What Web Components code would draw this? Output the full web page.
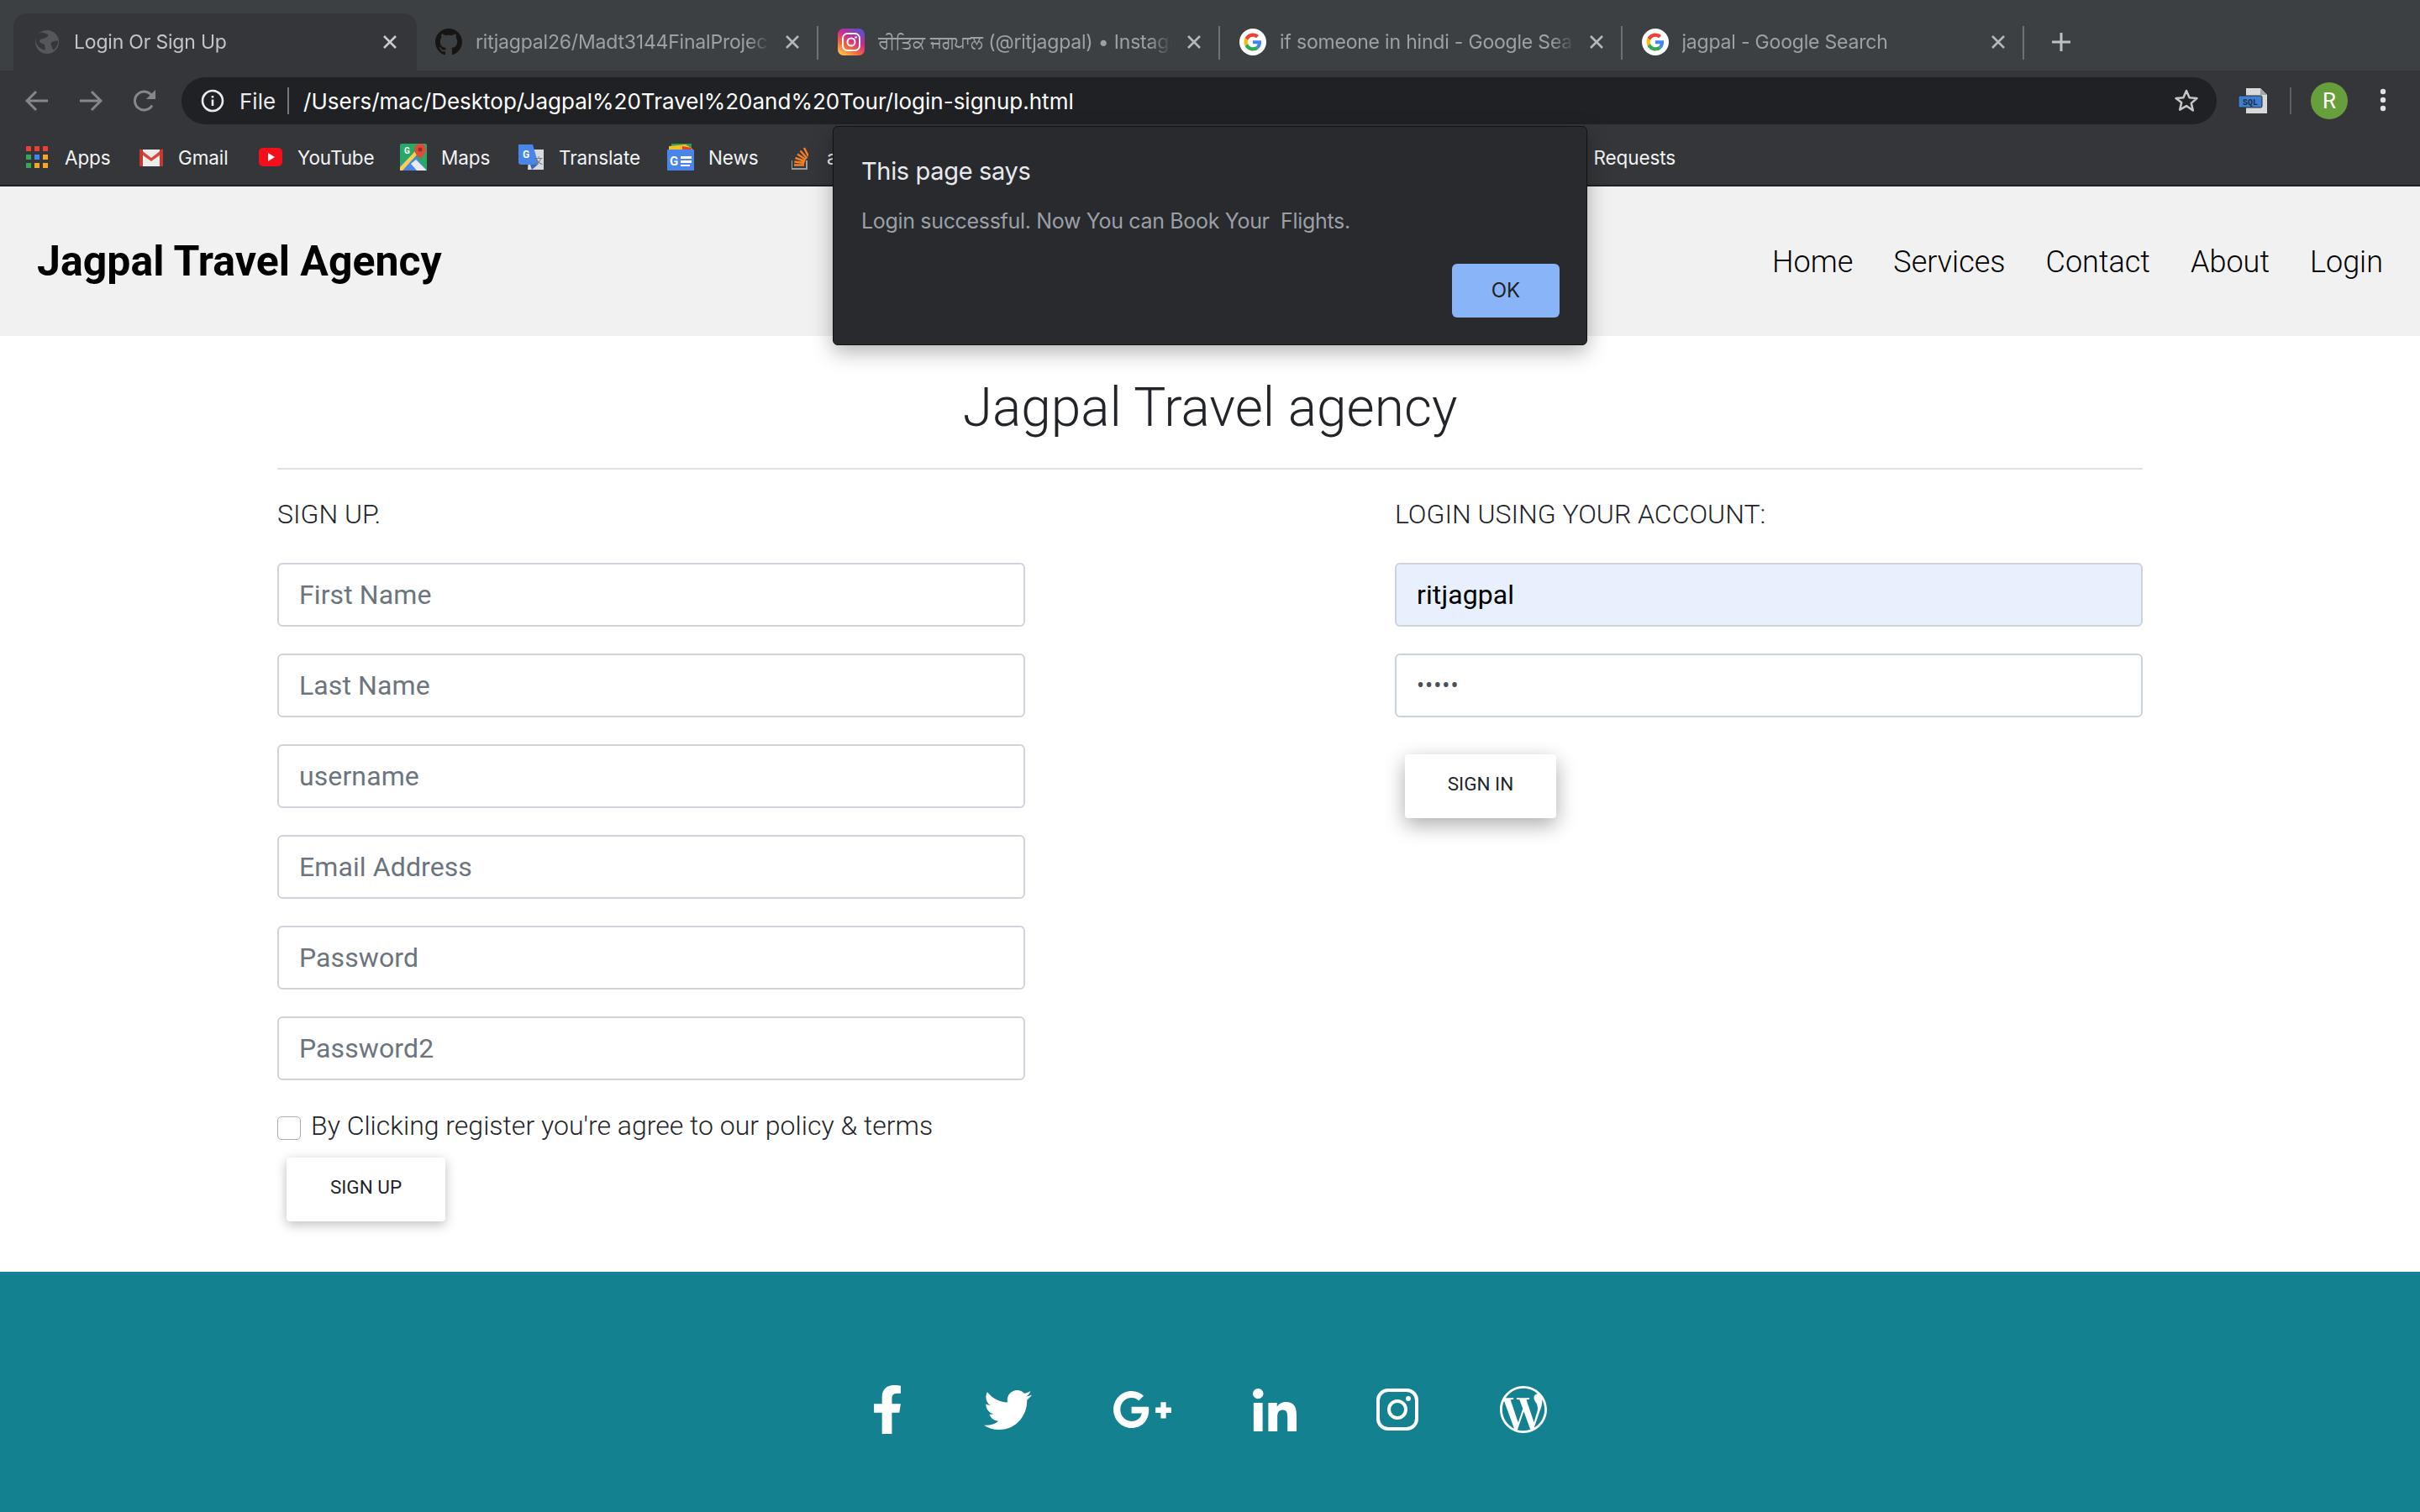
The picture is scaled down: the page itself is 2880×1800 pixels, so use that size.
<!DOCTYPE html>
<html>
<head>
<meta charset="utf-8">
<title>Login Or Sign Up</title>
<style>
  html, body { margin: 0; padding: 0; background: #fff; }
  body { width: 2880px; height: 1800px; overflow: hidden; position: relative; font-family: Roboto, "Liberation Sans", sans-serif; }
</style>
</head>
<body>

<browser-tabs>
  <browser-tab active title-text="Login Or Sign Up" icon="globe"></browser-tab>
  <browser-tab title-text="ritjagpal26/Madt3144FinalProjec" icon="github" divider></browser-tab>
  <browser-tab title-text="<span style='font-size:21.5px'>ਰੀਤਿਕ ਜਗਪਾਲ</span> (@ritjagpal) • Instagr" icon="instagram" divider></browser-tab>
  <browser-tab title-text="if someone in hindi - Google Sea" icon="google" divider></browser-tab>
  <browser-tab title-text="jagpal - Google Search" icon="google" divider></browser-tab>
</browser-tabs>
<browser-toolbar></browser-toolbar>
<bookmark-bar></bookmark-bar>

<site-header></site-header>

<page-heading>Jagpal Travel agency</page-heading>

<form-area>
  <form-panel slot="left" heading="SIGN UP.">
    <form-field>First Name</form-field>
    <form-field>Last Name</form-field>
    <form-field>username</form-field>
    <form-field>Email Address</form-field>
    <form-field>Password</form-field>
    <form-field>Password2</form-field>
    <terms-check>By Clicking register you're agree to our policy &amp; terms</terms-check>
    <raised-button style="margin-left:11px;margin-top:-18px" width="189">SIGN UP</raised-button>
  </form-panel>
  <form-panel slot="right" heading="LOGIN USING YOUR ACCOUNT:">
    <form-field filled>ritjagpal</form-field>
    <form-field secret>•••••</form-field>
    <raised-button style="margin-left:12px;margin-top:12px" width="180" strong>SIGN IN</raised-button>
  </form-panel>
</form-area>

<social-footer></social-footer>

<alert-dialog heading="This page says" message="Login successful. Now You can Book Your&nbsp; Flights."></alert-dialog>

<script>
const ICONS = {
  globe: `<svg width="32" height="32" viewBox="0 0 32 32"><circle cx="16" cy="16" r="14" fill="#54575b"/><path d="M10 4.5c3 1.5 6 1 7 3s-2 3-4 4-5 .5-6 3 3 3 5 4 1 4 2 7c-5-.5-11-5-11.500-11.500S6 6 10 4.500zM22 16c2-1 6-2 7-1 0 4-2 8-5 10.500-1.500-1-2-4-3-5.500s-.5-3 1-4z" fill="#35363a"/></svg>`,
  github: `<svg width="32" height="32" viewBox="0 0 16 16"><path fill="#161514" d="M8 0C3.58 0 0 3.58 0 8c0 3.54 2.29 6.53 5.47 7.59.4.07.55-.17.55-.38 0-.19-.01-.82-.01-1.49-2.01.37-2.53-.49-2.69-.94-.09-.23-.48-.94-.82-1.13-.28-.15-.68-.52-.01-.53.63-.01 1.08.58 1.23.82.72 1.21 1.87.87 2.33.66.07-.52.28-.87.51-1.07-1.78-.2-3.64-.89-3.64-3.95 0-.87.31-1.59.82-2.15-.08-.2-.36-1.02.08-2.12 0 0 .67-.21 2.2.82.64-.18 1.32-.27 2-.27.68 0 1.36.09 2 .27 1.53-1.04 2.2-.82 2.2-.82.44 1.1.16 1.92.08 2.12.51.56.82 1.27.82 2.15 0 3.07-1.87 3.75-3.65 3.95.29.25.54.73.54 1.48 0 1.07-.01 1.93-.01 2.2 0 .21.15.46.55.38A8.013 8.013 0 0016 8c0-4.42-3.58-8-8-8z"/></svg>`,
  instagram: `<svg width="32" height="32" viewBox="0 0 32 32"><defs><linearGradient id="ig" x1="0.2" y1="1" x2="0.8" y2="0"><stop offset="0" stop-color="#fdc04f"/><stop offset=".3" stop-color="#f4673a"/><stop offset=".6" stop-color="#d02a8e"/><stop offset="1" stop-color="#5a50cf"/></linearGradient></defs><rect width="32" height="32" rx="7" fill="url(#ig)"/><rect x="6" y="6" width="20" height="20" rx="5.500" fill="none" stroke="#fff" stroke-width="2"/><circle cx="16" cy="16" r="4.500" fill="none" stroke="#fff" stroke-width="2"/><circle cx="21.500" cy="10.500" r="1.300" fill="#fff"/></svg>`,
  google: `<svg width="32" height="32" viewBox="0 0 32 32"><circle cx="16" cy="16" r="16" fill="#fff"/><g transform="translate(5.500 5.500) scale(.4375)"><path fill="#EA4335" d="M24 9.500c3.540 0 6.710 1.220 9.210 3.600l6.850-6.850C35.900 2.380 30.470 0 24 0 14.620 0 6.510 5.380 2.560 13.220l7.980 6.190C12.430 13.720 17.740 9.500 24 9.500z"/><path fill="#4285F4" d="M46.980 24.550c0-1.570-.15-3.090-.38-4.550H24v9.020h12.940c-.58 2.960-2.260 5.480-4.780 7.180l7.730 6c4.510-4.180 7.090-10.360 7.090-17.650z"/><path fill="#FBBC05" d="M10.530 28.590c-.48-1.450-.76-2.990-.76-4.590s.27-3.140.76-4.590l-7.980-6.190C.92 16.460 0 20.120 0 24c0 3.880.92 7.540 2.560 10.780l7.970-6.190z"/><path fill="#34A853" d="M24 48c6.480 0 11.930-2.130 15.890-5.810l-7.730-6c-2.150 1.450-4.920 2.300-8.160 2.300-6.260 0-11.570-4.220-13.470-9.910l-7.980 6.190C6.510 42.620 14.620 48 24 48z"/></g></svg>`
};

// small helper so every element does the same shadow setup
class ShadowEl extends HTMLElement {
  constructor() {
    super();
    this.attachShadow({ mode: 'open' });
  }
}

class BrowserTabs extends ShadowEl {
  connectedCallback() {
    this.shadowRoot.innerHTML = `
      <style>
        :host { display: flex; height: 84px; background: #3d4043; padding-left: 16px; box-sizing: border-box; align-items: flex-end; }
        .plus { margin-left: 29px; align-self: flex-start; margin-top: 36px; }
      </style>
      <slot></slot>
      <svg class="plus" width="28" height="28" viewBox="0 0 28 28"><path d="M14 3v22M3 14h22" stroke="#bdc1c6" stroke-width="3"/></svg>`;
  }
}

class BrowserTab extends ShadowEl {
  connectedCallback() {
    const active = this.hasAttribute('active');
    const icon = ICONS[this.getAttribute('icon')];
    this.shadowRoot.innerHTML = `
      <style>
        :host { display: flex; align-items: center; box-sizing: border-box; height: 68px; width: ${active ? 480 : 478.5}px; position: relative;
                padding: 0 24px 0 ${active ? 24 : 22}px; color: ${active ? '#c2c4c7' : '#9da0a4'};
                background: ${active ? '#35363a' : 'transparent'}; border-radius: 16px 16px 0 0;
                font: 400 23px Inter, "Noto Sans", "DejaVu Sans", sans-serif; }
        svg.fav { flex: none; }
        .title { flex: 1; min-width: 0; margin-left: 16px; white-space: nowrap; letter-spacing: -.2px;
                 -webkit-mask-image: linear-gradient(to right, #000 calc(100% - 28px), transparent); }
        .x { flex: none; margin-left: 18px; }
        .div { position: absolute; right: 1px; top: 15px; width: 2px; height: 40px; background: #6f7275; }
      </style>
      ${icon.replace('<svg', '<svg class="fav"')}
      <span class="title">${this.getAttribute('title-text')}</span>
      <svg class="x" width="16" height="16" viewBox="0 0 16 16"><path d="M1 1l14 14M15 1L1 15" stroke="${active ? '#c8cacc' : '#b5b8bb'}" stroke-width="2.600"/></svg>
      ${this.hasAttribute('divider') ? '<span class="div"></span>' : ''}`;
  }
}

class BrowserToolbar extends ShadowEl {
  connectedCallback() {
    this.shadowRoot.innerHTML = `
      <style>
        :host { display: flex; align-items: center; height: 64px; background: #35363a; box-sizing: border-box; padding-top: 8px; position: relative;
                font-family: Inter, "Noto Sans", sans-serif; }
        .nav { display: flex; align-items: center; gap: 36px; width: 216px; padding-left: 30px; box-sizing: border-box; }
        .url { display: flex; align-items: center; width: 2422px; height: 56px; flex: none; background: #202124; border-radius: 28px; box-sizing: border-box; padding: 0 21px 0 23px; color: #fff; }
        .file { margin-left: 18px; font-size: 26px; color: #e8eaed; }
        .sep { width: 2px; height: 32px; background: #75787b; margin: 0 17px 0 14px; }
        .path { flex: 1; font-size: 26px; white-space: nowrap; color: #fff; }
        .tools { display: flex; align-items: center; }
        .tools .vsep { width: 2px; height: 32px; background: #5d6063; margin: 0 23px 0 26px; }
        .avatar { width: 44px; height: 44px; border-radius: 50%; background: #689f3d; color: #fff; font: 400 26px Roboto, sans-serif; display: flex; align-items: center; justify-content: center; }
      </style>
      <div class="nav">
        <svg width="28" height="26" viewBox="0 0 28 26"><path d="M27 13H3M13 2L2 13l11 11" fill="none" stroke="#85888b" stroke-width="3"/></svg>
        <svg width="28" height="26" viewBox="0 0 28 26"><path d="M1 13h24M15 2l11 11-11 11" fill="none" stroke="#85888b" stroke-width="3"/></svg>
        <svg width="28" height="28" viewBox="0 0 28 28"><path d="M23 19.500A11 11 0 1 1 23 8.500" fill="none" stroke="#85888b" stroke-width="3"/><path d="M27 1v11H16z" fill="#85888b"/></svg>
      </div>
      <div class="url">
        <svg width="28" height="28" viewBox="0 0 28 28"><circle cx="14" cy="14" r="12" fill="none" stroke="#e8eaed" stroke-width="2.600"/><path d="M14 12.500v7.500M14 8v2.500" stroke="#e8eaed" stroke-width="2.600"/></svg>
        <span class="file">File</span><span class="sep"></span>
        <span class="path">/Users/mac/Desktop/Jagpal%20Travel%20and%20Tour/login-signup.html</span>
        <svg width="30" height="30" viewBox="0 0 30 30"><path d="M15 3l3.600 8.200 8.900.8-6.700 5.900 2 8.700L15 21.100l-7.800 4.500 2-8.700L2.500 12l8.900-.8z" fill="none" stroke="#c4c6c8" stroke-width="2.500" stroke-linejoin="round"/></svg>
      </div>
      <div class="tools">
        <svg style="margin-left:25px" width="36" height="32" viewBox="0 0 36 32"><path d="M10 1h17l8 8v22H10z" fill="#d8d9da"/><path d="M27 1l8 8h-8z" fill="#a3a5a7"/><rect x="1" y="10" width="28" height="14" rx="1.500" fill="#3f7fd0" stroke="#27292c" stroke-width="1"/><text x="15" y="21" font-family="Liberation Mono, monospace" font-size="10" font-weight="700" fill="#1d2c44" text-anchor="middle" textLength="18">SQL</text></svg>
        <span class="vsep"></span>
        <span class="avatar">R</span>
        <svg style="margin-left:38px" width="8" height="30" viewBox="0 0 8 30"><circle cx="4" cy="4" r="3.200" fill="#dfe1e3"/><circle cx="4" cy="14" r="3.200" fill="#dfe1e3"/><circle cx="4" cy="24" r="3.200" fill="#dfe1e3"/></svg>
      </div>`;
  }
}

class BookmarkBar extends ShadowEl {
  connectedCallback() {
    const dots = ['#e94235','#e94235','#e94235','#34a853','#4285f4','#f5a623','#34a853','#f5a623','#f5a623'];
    const apps = dots.map((c, i) => `<rect x="${(i % 3) * 10}" y="${Math.floor(i / 3) * 10}" width="6" height="6" fill="${c}"/>`).join('');
    this.shadowRoot.innerHTML = `
      <style>
        :host { display: flex; align-items: center; height: 74px; box-sizing: border-box; padding: 6px 0 0 31px; background: #35363a; border-bottom: 2px solid #1f2023;
                color: #f1f3f4; font: 400 22.500px Inter, "Noto Sans", sans-serif; letter-spacing: -.1px; }
        .b { display: flex; align-items: center; flex: none; }
        .b span { margin-left: var(--g, 18px); }
        .b svg { flex: none; }
      </style>
      <div class="b" style="--g:20px;width:135px"><svg width="26" height="28" viewBox="0 0 26 26">${apps}</svg><span>Apps</span></div>
      <div class="b" style="width:142px"><svg width="28" height="22" viewBox="0 0 28 22"><path d="M0 2h28v20H0z" fill="#ececec"/><path d="M0 1l14 11L28 1v5L14 16 0 6z" fill="#d8483a"/><path d="M0 2h4v20H0zM24 2h4v20h-4z" fill="#c23b30"/></svg><span>Gmail</span></div>
      <div class="b" style="width:168px"><svg width="28" height="22" viewBox="0 0 28 22"><rect width="28" height="22" rx="5" fill="#f40f1a"/><path d="M11 6l8 5-8 5z" fill="#fff"/></svg><span>YouTube</span></div>
      <div class="b" style="--g:17px;width:141px"><svg width="32" height="32" viewBox="0 0 32 32"><rect width="32" height="32" rx="2" fill="#2aa866"/><path d="M0 32V26L16 12 32 32z" fill="#4a86e8"/><path d="M0 28L20 7l3 3L3 32H0z" fill="#fbd14b"/><path d="M20 32l-7-8 6-5 13 13z" fill="#e8eaed"/><path d="M24 0a7 7 0 0 1 7 7c0 5-7 11-7 11s-7-6-7-11a7 7 0 0 1 7-7z" fill="#db4c3f"/><circle cx="24" cy="7" r="2.500" fill="#9c2c22"/><text x="5" y="12" font-size="10" font-weight="700" fill="#fff" font-family="Roboto, sans-serif">G</text></svg><span>Maps</span></div>
      <div class="b" style="width:177px"><svg width="30" height="30" viewBox="0 0 30 30"><path d="M13 6h17v24H11z" fill="#d9dadb"/><path d="M0 0h17l7 24H3a3 3 0 0 1-3-3z" fill="#4a86e8"/><path d="M14 24h9l-7 6z" fill="#3766bd"/><text x="5" y="16" font-size="12" font-weight="700" fill="#fff" font-family="Roboto, sans-serif">G</text><text x="19" y="23" font-size="10" fill="#6d7072" font-family="Noto Sans CJK SC, sans-serif">文</text></svg><span>Translate</span></div>
      <div class="b" style="--g:17px;width:148px"><svg width="32" height="32" viewBox="0 0 32 32"><path d="M5 0h24v8H5z" fill="#2aa14f"/><path d="M2 3l20-2 8 5v6H2z" fill="#f5bf2b"/><path d="M18 3l11 2v7H18z" fill="#e34133"/><rect y="7" width="32" height="25" rx="1" fill="#4a86e8"/><text x="3" y="26" font-size="15" font-weight="700" fill="#fff" font-family="Roboto, sans-serif">G</text><path d="M16 15h13v3H16zM16 20h13v3H16zM16 25h11v2H16z" fill="#fff"/></svg><span>News</span></div>
      <div class="b" style="--g:22px"><svg width="20" height="30" viewBox="0 0 20 30"><path d="M0 19v10h18V19" fill="none" stroke="#9a9c9e" stroke-width="2"/><path d="M3 24.500h12M3.300 20.500l12 1.500M4.500 16l11.500 4M7 11.500l10 6.500M10.500 7.500l8 9M15 4l5 10" stroke="#f48024" stroke-width="2.400"/></svg><span>a</span></div>
      <div class="b" style="margin-left:900px"><span style="margin-left:0">Requests</span></div>`;
  }
}

class SiteHeader extends ShadowEl {
  connectedCallback() {
    const links = ['Home', 'Services', 'Contact', 'About', 'Login'];
    this.shadowRoot.innerHTML = `
      <style>
        :host { display: flex; align-items: center; justify-content: space-between; height: 178px; background: #f1f1f1; box-sizing: border-box; padding: 0 44px; color: #000; font-family: Roboto, sans-serif; }
        .brand { font-size: 50px; font-weight: 700; }
        nav { display: flex; gap: 48px; font-size: 36px; font-weight: 300; padding-top: 2px; }
      </style>
      <div class="brand">Jagpal Travel Agency</div>
      <nav>${links.map(l => `<span>${l}</span>`).join('')}</nav>`;
  }
}

class PageHeading extends ShadowEl {
  connectedCallback() {
    this.shadowRoot.innerHTML = `
      <style>
        :host { display: block; margin: 0 330px; height: 159px; box-sizing: border-box; padding-top: 48px; border-bottom: 2px solid #e2e3e4;
                text-align: center; font: 300 64px/76px Roboto, sans-serif; color: #212529; }
      </style>
      <slot></slot>`;
  }
}

class FormArea extends ShadowEl {
  connectedCallback() {
    this.shadowRoot.innerHTML = `
      <style>
        :host { display: grid; grid-template-columns: 890px 890px; justify-content: space-between; margin: 0 330px; height: 955px; box-sizing: border-box; padding-top: 32px; }
      </style>
      <slot name="left"></slot><slot name="right"></slot>`;
  }
}

class FormPanel extends ShadowEl {
  connectedCallback() {
    this.shadowRoot.innerHTML = `
      <style>
        :host { display: flex; flex-direction: column; align-items: stretch; gap: 32px; }
        h4 { margin: 0 0 5px; font: 300 32px/42px Roboto, sans-serif; color: #212529; }
      </style>
      <h4>${this.getAttribute('heading')}</h4>
      <slot></slot>`;
  }
}

class FormField extends ShadowEl {
  connectedCallback() {
    const filled = this.hasAttribute('filled');
    const secret = this.hasAttribute('secret');
    this.shadowRoot.innerHTML = `
      <style>
        :host { display: flex; align-items: center; height: 76px; box-sizing: border-box; padding: 0 24px; border: 2px solid #ced4da; border-radius: 6px;
                background: ${filled ? '#e8f0fe' : '#fff'}; color: ${filled ? '#000' : secret ? '#495057' : '#6c757d'};
                font: 400 32px Roboto, sans-serif; letter-spacing: .1px; }
        :host([secret]) { font-size: 27px; letter-spacing: 1px; border-color: #c8d3e0; }
      </style>
      <slot></slot>`;
  }
}

class TermsCheck extends ShadowEl {
  connectedCallback() {
    this.shadowRoot.innerHTML = `
      <style>
        :host { display: flex; align-items: center; margin-top: -2px; height: 48px; font: 300 32px Roboto, sans-serif; color: #212529; }
        i { flex: none; width: 28px; height: 28px; box-sizing: border-box; border: 1.500px solid #aaadb0; border-radius: 5px; margin-right: 12px; margin-top: 6px; background: #fff; }
      </style>
      <i></i><slot></slot>`;
  }
}

class RaisedButton extends ShadowEl {
  connectedCallback() {
    const shadow = this.hasAttribute('strong')
      ? '0 8px 24px rgba(0,0,0,.33)'
      : '0 4px 14px rgba(0,0,0,.26)';
    this.shadowRoot.innerHTML = `
      <style>
        :host { display: flex; align-items: center; justify-content: center; align-self: flex-start; box-sizing: border-box; width: ${this.getAttribute('width')}px; height: 76px; padding-bottom: 6px;
                background: #fff; border-radius: 4px; box-shadow: ${shadow}; color: #212529; font: 400 22.500px Roboto, sans-serif; }
      </style>
      <slot></slot>`;
  }
}

class SocialFooter extends ShadowEl {
  connectedCallback() {
    this.shadowRoot.innerHTML = `
      <style>
        :host { display: flex; justify-content: center; align-items: center; gap: 97px; height: 286px; box-sizing: border-box; padding-top: 42px; background: #13818f; }
        svg { flex: none; fill: #fff; display: block; }
      </style>
      <svg width="32" height="58" viewBox="22 0 272 512" preserveAspectRatio="none"><path d="M279.14 288l14.220-92.660h-88.910v-60.130c0-25.350 12.420-50.060 52.240-50.060h40.420V6.260S260.430 0 225.360 0c-73.220 0-121.080 44.380-121.080 124.720v70.620H22.890V288h81.390v224h100.170V288z"/></svg>
      <svg style="margin-left:2px" width="57" height="47" viewBox="0 48 512 416" preserveAspectRatio="none"><path d="M459.370 151.716c.325 4.548.325 9.097.325 13.645 0 138.720-105.583 298.558-298.558 298.558-59.452 0-114.680-17.219-161.137-47.106 8.447.974 16.568 1.299 25.340 1.299 49.055 0 94.213-16.568 130.274-44.832-46.132-.975-84.792-31.188-98.112-72.772 6.498.974 12.995 1.624 19.818 1.624 9.421 0 18.843-1.300 27.614-3.573-48.081-9.747-84.143-51.980-84.143-102.985v-1.299c13.969 7.797 30.214 12.670 47.431 13.319-28.264-18.843-46.781-51.005-46.781-87.391 0-19.492 5.197-37.360 14.294-52.954 51.655 63.675 129.300 105.258 216.365 109.807-1.624-7.797-2.599-15.918-2.599-24.040 0-57.828 46.782-104.934 104.934-104.934 30.213 0 57.502 12.670 76.670 33.137 23.715-4.548 46.456-13.320 66.599-25.340-7.798 24.366-24.366 44.833-46.132 57.827 21.117-2.273 41.584-8.122 60.426-16.243-14.292 20.791-32.161 39.308-52.628 54.253z"/></svg>
      <svg width="69" height="44" viewBox="12 64 616 384" preserveAspectRatio="none"><path d="M386.061 228.496c1.834 9.692 3.143 19.384 3.143 31.956C389.204 370.205 315.599 448 204.800 448c-106.084 0-192-85.915-192-192s85.916-192 192-192c51.864 0 95.083 18.859 128.611 50.292l-52.126 50.030c-14.145-13.621-39.028-29.599-76.485-29.599-65.484 0-118.920 54.221-118.920 121.277 0 67.056 53.436 121.277 118.920 121.277 75.961 0 104.513-54.745 108.965-82.773H204.800v-66.009h181.261zm185.406 6.437V179.200h-56.001v55.733h-55.733v56.001h55.733v55.733h56.001v-55.733H627.200v-56.001h-55.733z"/></svg>
      <svg width="52" height="51" viewBox="0 0 448 448" preserveAspectRatio="none"><path d="M100.280 448H7.400V148.900h92.880zM53.790 108.100C24.090 108.100 0 83.500 0 53.800a53.790 53.790 0 0 1 107.580 0c0 29.700-24.100 54.300-53.790 54.300zM447.900 448h-92.680V302.400c0-34.700-.7-79.200-48.290-79.200-48.290 0-55.690 37.700-55.690 76.700V448h-92.780V148.900h89.080v40.800h1.300c12.400-23.500 42.690-48.300 87.880-48.300 94 0 111.280 61.900 111.280 142.300V448z"/></svg>
      <svg width="50" height="50" viewBox="0 0 50 50" style="fill:none;margin-left:-2px"><rect x="2" y="2" width="46" height="46" rx="12" stroke="#fff" stroke-width="4"/><circle cx="25" cy="25" r="10" stroke="#fff" stroke-width="4"/><circle cx="38" cy="12" r="3" style="fill:#fff"/></svg>
      <svg width="56" height="56" viewBox="8 8 496 496"><path d="M256 8C119.300 8 8 119.200 8 256c0 136.700 111.300 248 248 248s248-111.300 248-248C504 119.200 392.700 8 256 8zM33 256c0-32.300 6.900-63 19.300-90.700l106.400 291.400C84.300 420.500 33 344.200 33 256zm223 223c-21.900 0-43-3.200-63-9.100l66.900-194.400 68.500 187.800c.5 1.100 1 2.100 1.600 3.100-23.100 8.100-48 12.600-74 12.600zm30.700-327.500c13.400-.7 25.500-2.100 25.500-2.100 12-1.400 10.600-19.100-1.400-18.400 0 0-36.100 2.800-59.400 2.800-21.900 0-58.700-2.800-58.700-2.800-12-.7-13.400 17.700-1.400 18.400 0 0 11.400 1.400 23.400 2.100l34.700 95.200L200.600 393l-81.200-241.500c13.400-.7 25.500-2.100 25.500-2.100 12-1.400 10.600-19.100-1.400-18.400 0 0-36.100 2.800-59.400 2.800-4.200 0-9.100-.1-14.400-.3C109.600 73 178.100 33 256 33c58 0 110.900 22.200 150.600 58.500-1-.1-1.900-.2-2.900-.2-21.900 0-37.400 19.100-37.400 39.600 0 18.400 10.600 33.900 21.900 52.300 8.500 14.800 18.400 33.900 18.400 61.500 0 19.100-7.300 41.200-17 72.100l-22.200 74.300-80.700-239.600zm81.400 297.200l68.100-196.900c12.700-31.800 17-57.200 17-79.900 0-8.200-.5-15.800-1.500-22.900 17.400 31.800 27.300 68.200 27.300 107 0 82.300-44.600 154.100-110.900 192.700z"/></svg>`;
  }
}

class AlertDialog extends ShadowEl {
  connectedCallback() {
    this.shadowRoot.innerHTML = `
      <style>
        /* the dialog floats over the bookmarks and the page, so it alone is absolute */
        :host { position: absolute; left: 991px; top: 150px; width: 898px; height: 261px; box-sizing: border-box; padding: 32px 32px 32px 33px;
                background: #292a2d; border: 1px solid #121315; border-radius: 6px; box-shadow: 0 8px 26px rgba(0,0,0,.3);
                display: flex; flex-direction: column; font-family: Inter, "Noto Sans", sans-serif; }
        h2 { margin: 0; font-size: 29px; line-height: 42px; font-weight: 400; color: #e8eaed; letter-spacing: -.35px; }
        p { margin: 17px 0 0; font-size: 25px; line-height: 42px; color: #9aa0a6; letter-spacing: -.33px; }
        .row { margin-top: auto; display: flex; justify-content: flex-end; }
        button { all: unset; width: 128px; height: 64px; background: #8ab4f8; color: #202124; border-radius: 6px; font: 400 24px Inter, sans-serif; text-align: center; line-height: 64px; }
      </style>
      <h2>${this.getAttribute('heading')}</h2>
      <p>${this.getAttribute('message')}</p>
      <div class="row"><button>OK</button></div>`;
  }
}

customElements.define('browser-tabs', BrowserTabs);
customElements.define('browser-tab', BrowserTab);
customElements.define('browser-toolbar', BrowserToolbar);
customElements.define('bookmark-bar', BookmarkBar);
customElements.define('site-header', SiteHeader);
customElements.define('page-heading', PageHeading);
customElements.define('form-area', FormArea);
customElements.define('form-panel', FormPanel);
customElements.define('form-field', FormField);
customElements.define('terms-check', TermsCheck);
customElements.define('raised-button', RaisedButton);
customElements.define('social-footer', SocialFooter);
customElements.define('alert-dialog', AlertDialog);
</script>
</body>
</html>
